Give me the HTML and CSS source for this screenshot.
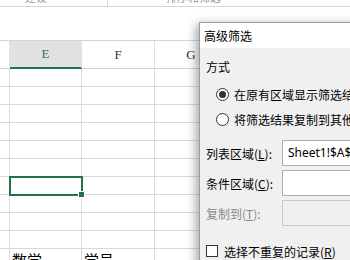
FILE: index.html
```html
<!DOCTYPE html>
<html lang="zh-CN">
<head>
    <meta charset="UTF-8">
    <link rel="stylesheet" href="styles.css">
</head>
<body>
    <div class="app">
        <div class="ribbon">
            <span class="rb-text rb-left">建设</span>
            <span class="rb-sep"></span>
            <span class="rb-text rb-right">排序和筛选</span>
        </div>
        <div class="formula"></div>

        <div class="sheet">
            <div class="hd"></div>
            <div class="hd active">E</div>
            <div class="hd">F</div>
            <div class="hd">G</div>
            <div class="hd"></div>

            <div class="c rh"></div><div class="c"></div><div class="c"></div><div class="c"></div><div class="c"></div>
            <div class="c rh"></div><div class="c"></div><div class="c"></div><div class="c"></div><div class="c"></div>
            <div class="c rh"></div><div class="c"></div><div class="c"></div><div class="c"></div><div class="c"></div>
            <div class="c rh"></div><div class="c"></div><div class="c"></div><div class="c"></div><div class="c"></div>
            <div class="c rh"></div><div class="c"></div><div class="c"></div><div class="c"></div><div class="c"></div>
            <div class="c rh"></div><div class="c"></div><div class="c"></div><div class="c"></div><div class="c"></div>
            <div class="c rh"></div><div class="c sel"></div><div class="c"></div><div class="c"></div><div class="c"></div>
            <div class="c rh"></div><div class="c"></div><div class="c"></div><div class="c"></div><div class="c"></div>
            <div class="c rh"></div><div class="c"></div><div class="c"></div><div class="c"></div><div class="c"></div>
            <div class="c rh"></div><div class="c"></div><div class="c"></div><div class="c"></div><div class="c"></div>
            <div class="c rh"></div><div class="c txt">数学</div><div class="c txt">学号</div><div class="c"></div><div class="c"></div>
        </div>

        <div class="dialog">
            <div class="dlg-title">高级筛选</div>
            <div class="dlg-body">
                <div class="group-label">方式</div>
                <div class="radios">
                    <label class="radio-row"><span class="radio checked"></span>在原有区域显示筛选结果(F)</label>
                    <label class="radio-row"><span class="radio"></span>将筛选结果复制到其他位置(O)</label>
                </div>
                <div class="fields">
                    <div class="field">
                        <span class="field-label">列表区域(<u>L</u>):</span>
                        <span class="input">Sheet1!$A$1:$G$20</span>
                    </div>
                    <div class="field">
                        <span class="field-label">条件区域(<u>C</u>):</span>
                        <span class="input"></span>
                    </div>
                    <div class="field disabled">
                        <span class="field-label">复制到(<u>T</u>):</span>
                        <span class="input"></span>
                    </div>
                </div>
                <label class="check-row"><span class="checkbox"></span>选择不重复的记录(<u>R</u>)</label>
            </div>
        </div>
    </div>
</body>
</html>
```

FILE: styles.css
```css
body {
    margin: 0;
    background-color: #ffffff;
    font-family: "Noto Sans CJK SC", "Noto Sans", sans-serif;
    font-size: 12px;
    color: #000;
    overflow: hidden;
}

.app {
    position: relative;
    width: 350px;
    height: 260px;
    overflow: hidden;
}

/* ribbon strip at the very top, mostly cropped */
.ribbon {
    height: 6px;
    border-bottom: 1px solid #d6d6d6;
    display: flex;
    overflow: hidden;
    color: #9a9a9a;
    font-size: 11px;
    line-height: 12px;
}

.rb-text {
    margin-top: -9px;
}

.rb-left {
    margin-left: 25px;
    width: 82px;
}

.rb-sep {
    width: 1px;
    background-color: #d6d6d6;
}

.rb-right {
    margin-left: 58px;
}

.formula {
    height: 33px;
    border-bottom: 1px solid #d4d4d4;
}

/* worksheet grid */
.sheet {
    display: grid;
    grid-template-columns: 10px 72px 73px 73px 73px;
    grid-auto-rows: 18px;
    grid-template-rows: 28px;
}

.hd {
    border-right: 1px solid #e1e1e1;
    border-bottom: 1px solid #d4d4d4;
    display: flex;
    align-items: center;
    justify-content: center;
    font-family: "Liberation Serif", serif;
    font-size: 13px;
    color: #333;
}

.hd.active {
    background-color: #e1e1e1;
    border-bottom: 2px solid #217346;
    color: #217346;
}

.c {
    border-right: 1px solid #d9d9d9;
    border-bottom: 1px solid #d9d9d9;
}

.c.txt {
    font-size: 15px;
    line-height: 18px;
    padding: 2px 0 0 2px;
}

.c.sel {
    position: relative;
    outline: 2px solid #217346;
    outline-offset: -1px;
}

.c.sel::after {
    content: "";
    position: absolute;
    right: -4px;
    bottom: -4px;
    width: 5px;
    height: 5px;
    background-color: #217346;
    border: 1px solid #fff;
}

/* the advanced filter dialog */
.dialog {
    position: absolute;
    left: 199px;
    top: 22px;
    width: 180px;
    height: 250px;
    border: 1px solid #9c9c9c;
    background-color: #f0f0f0;
    box-shadow: -3px 2px 9px rgba(0, 0, 0, 0.35);
    display: flex;
    flex-direction: column;
}

.dlg-title {
    height: 25px;
    line-height: 25px;
    padding-left: 4px;
    background-color: #ffffff;
    font-size: 12px;
}

.dlg-body {
    padding: 11px 0 0 6px;
    display: flex;
    flex-direction: column;
}

.group-label {
    line-height: 16px;
}

.radios {
    margin-top: 7px;
    padding-left: 10px;
}

.radio-row {
    height: 25px;
    display: flex;
    align-items: center;
    white-space: nowrap;
}

.radio {
    width: 11px;
    height: 11px;
    border: 1px solid #333;
    border-radius: 50%;
    background-color: #fff;
    margin-right: 5px;
    display: flex;
    align-items: center;
    justify-content: center;
    flex-shrink: 0;
}

.radio.checked::after {
    content: "";
    width: 7px;
    height: 7px;
    border-radius: 50%;
    background-color: #333;
}

.fields {
    margin-top: 8px;
    display: flex;
    flex-direction: column;
    gap: 4px;
}

.field {
    display: flex;
    align-items: center;
    height: 26px;
}

.field-label {
    width: 76px;
    flex-shrink: 0;
    white-space: nowrap;
}

.input {
    flex: 1;
    height: 24px;
    line-height: 24px;
    border: 1px solid #adadad;
    background-color: #fff;
    padding-left: 5px;
    white-space: nowrap;
    overflow: hidden;
    font-family: "Noto Sans", sans-serif;
}

.field.disabled .field-label {
    color: #8a8a8a;
}

.field.disabled .input {
    border-color: #c8c8c8;
    background-color: #f0f0f0;
}

.check-row {
    margin-top: 17px;
    height: 16px;
    display: flex;
    align-items: center;
    white-space: nowrap;
}

.checkbox {
    width: 10px;
    height: 10px;
    border: 1px solid #333;
    background-color: #fff;
    margin-right: 6px;
}
```
